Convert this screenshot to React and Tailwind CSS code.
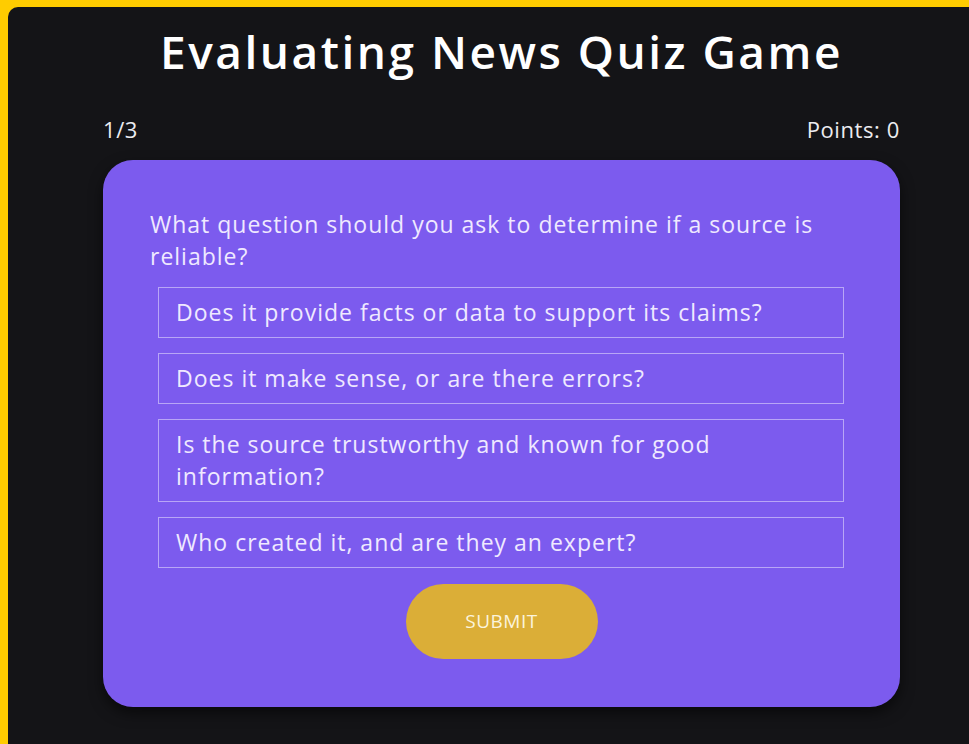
const QUESTION = {
  text: 'What question should you ask to determine if a source is reliable?',
  options: [
    'Does it provide facts or data to support its claims?',
    'Does it make sense, or are there errors?',
    'Is the source trustworthy and known for good information?',
    'Who created it, and are they an expert?',
  ],
}

export default function App() {
  return (
    <div className="min-h-[744px] bg-[#ffcc00] pt-[7px] pl-[8px]" style={{ fontFamily: '"Open Sans", Lato, sans-serif' }}>
      <div className="min-h-[737px] bg-[#141417] rounded-tl-[10px] pb-10">
        <div className="w-[797px] ml-[95px]">
          <h1 className="pt-[14px] text-center text-[46px] leading-[60px] font-semibold text-white tracking-[2.5px]">
            Evaluating News Quiz Game
          </h1>

          <div className="mt-[34px] flex justify-between text-[22px] leading-[28px] text-[#ececf0] tracking-[0.6px]">
            <span>1/3</span>
            <span>Points: 0</span>
          </div>

          {/* question card */}
          <div className="mt-[17px] h-[547px] rounded-[30px] bg-[#7c5bee] shadow-[0_6px_14px_rgba(0,0,0,0.55)] pt-[48px] px-[47px]">
            <p className="text-[23px] leading-[32px] text-[#efe9ff] tracking-[1px]">{QUESTION.text}</p>

            <div className="mt-[15px] ml-[8px] mr-[9px] flex flex-col gap-[15px]">
              {QUESTION.options.map((opt) => (
                <button
                  key={opt}
                  className="text-left border-[1.5px] border-[#b8a6f6] px-[17px] pt-[8px] pb-[9px] text-[23px] leading-[32px] text-[#efe9ff] tracking-[1px]"
                >
                  {opt}
                </button>
              ))}
            </div>

            <div className="mt-[16px] flex justify-center">
              <button className="w-[192px] h-[75px] rounded-full bg-[#dbae37] text-[19px] text-[#fbf4dc] tracking-[0.5px]">
                SUBMIT
              </button>
            </div>
          </div>
        </div>
      </div>
    </div>
  )
}
